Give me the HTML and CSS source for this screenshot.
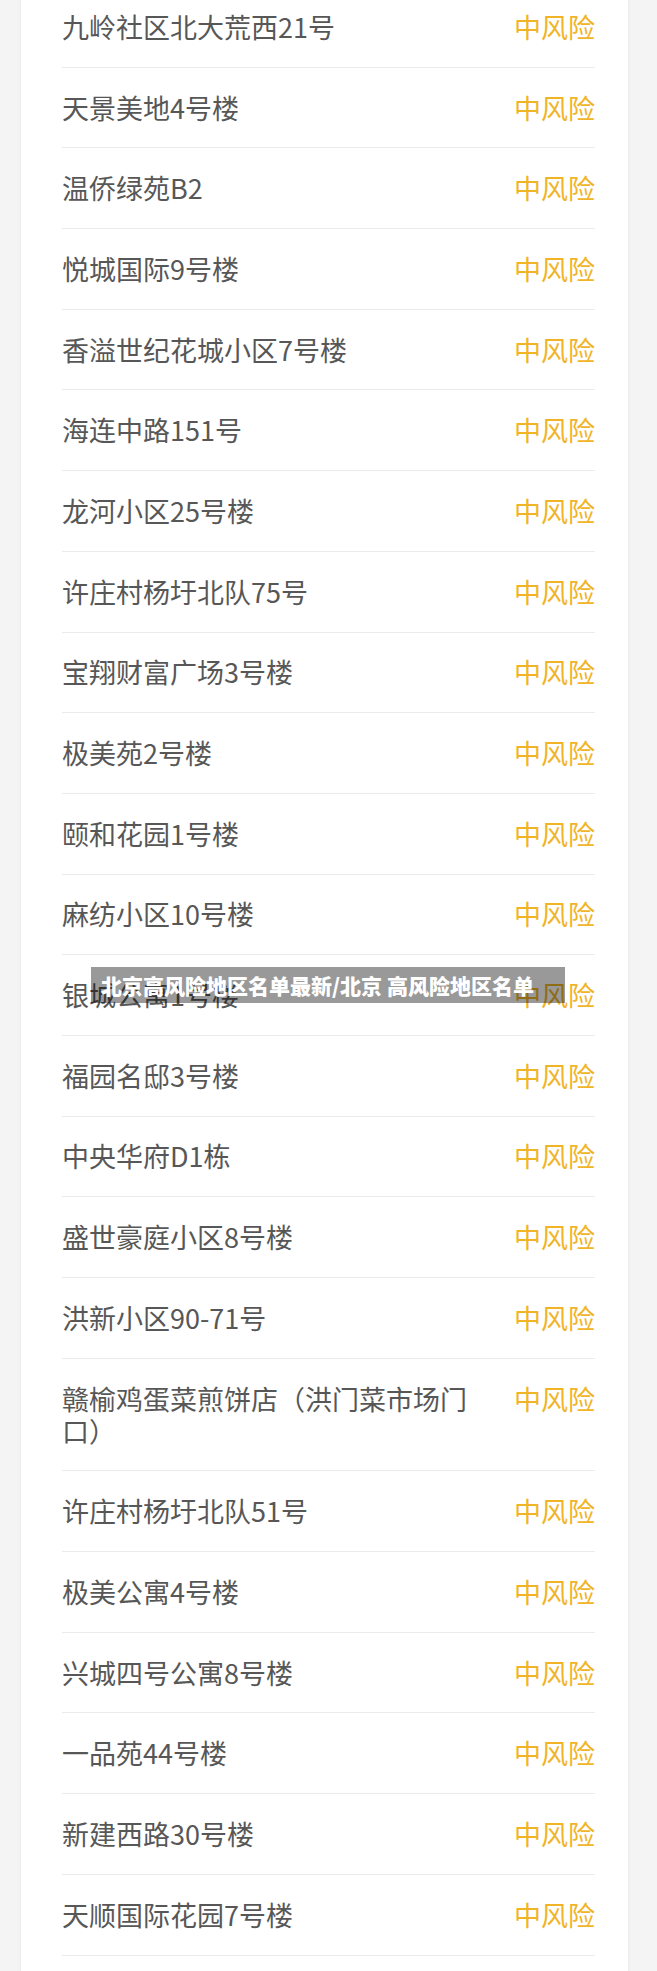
FILE: index.html
```html
<!DOCTYPE html>
<html lang="zh-CN">
<head>
  <meta charset="UTF-8" />
  <title>北京高风险地区名单</title>
  <link rel="stylesheet" href="styles.css">
</head>
<body>

  <div class="page">
    <div class="card">
      <ul class="list">
        <li class="row"><span class="name">九岭社区北大荒西21号</span><span class="level">中风险</span></li>
        <li class="row"><span class="name">天景美地4号楼</span><span class="level">中风险</span></li>
        <li class="row"><span class="name">温侨绿苑B2</span><span class="level">中风险</span></li>
        <li class="row"><span class="name">悦城国际9号楼</span><span class="level">中风险</span></li>
        <li class="row"><span class="name">香溢世纪花城小区7号楼</span><span class="level">中风险</span></li>
        <li class="row"><span class="name">海连中路151号</span><span class="level">中风险</span></li>
        <li class="row"><span class="name">龙河小区25号楼</span><span class="level">中风险</span></li>
        <li class="row"><span class="name">许庄村杨圩北队75号</span><span class="level">中风险</span></li>
        <li class="row"><span class="name">宝翔财富广场3号楼</span><span class="level">中风险</span></li>
        <li class="row"><span class="name">极美苑2号楼</span><span class="level">中风险</span></li>
        <li class="row"><span class="name">颐和花园1号楼</span><span class="level">中风险</span></li>
        <li class="row"><span class="name">麻纺小区10号楼</span><span class="level">中风险</span></li>
        <li class="row"><span class="name">银城公寓1号楼</span><span class="level">中风险</span></li>
        <li class="row"><span class="name">福园名邸3号楼</span><span class="level">中风险</span></li>
        <li class="row"><span class="name">中央华府D1栋</span><span class="level">中风险</span></li>
        <li class="row"><span class="name">盛世豪庭小区8号楼</span><span class="level">中风险</span></li>
        <li class="row"><span class="name">洪新小区90-71号</span><span class="level">中风险</span></li>
        <li class="row"><span class="name">赣榆鸡蛋菜煎饼店（洪门菜市场门口）</span><span class="level">中风险</span></li>
        <li class="row"><span class="name">许庄村杨圩北队51号</span><span class="level">中风险</span></li>
        <li class="row"><span class="name">极美公寓4号楼</span><span class="level">中风险</span></li>
        <li class="row"><span class="name">兴城四号公寓8号楼</span><span class="level">中风险</span></li>
        <li class="row"><span class="name">一品苑44号楼</span><span class="level">中风险</span></li>
        <li class="row"><span class="name">新建西路30号楼</span><span class="level">中风险</span></li>
        <li class="row"><span class="name">天顺国际花园7号楼</span><span class="level">中风险</span></li>
      </ul>
    </div>

    <div class="caption">北京高风险地区名单最新/北京 高风险地区名单</div>
  </div>

</body>
</html>
```

FILE: styles.css
```css
body {
    margin: 0;
    padding: 0;
    background-color: #f4f4f4;
    font-family: "Noto Sans CJK SC", "Noto Sans", sans-serif;
}
.page {
    position: relative;
    height: 1971px;
    overflow: hidden;
}
.card {
    margin: -13px 29px 0 21px;
    padding: 0 33px 40px 41px;
    background: white;
    box-shadow: 0 0 4px rgba(0,0,0,0.06);
}
.list {
    list-style: none;
    margin: 0;
    padding: 0;
}
.row {
    display: flex;
    align-items: flex-start;
    justify-content: space-between;
    padding: 23.85px 0;
    border-bottom: 1px solid #ebebeb;
    font-size: 27px;
    line-height: 32px;
}
.name {
    color: #575757;
    max-width: 410px;
}
.level {
    color: #f1b427;
    white-space: nowrap;
}
.caption {
    position: absolute;
    left: 91px;
    top: 967px;
    width: 464px;
    height: 36px;
    padding-left: 10px;
    background: rgba(0,0,0,0.4);
    color: white;
    font-size: 21px;
    font-weight: 900;
    line-height: 36px;
    white-space: nowrap;
}
```
